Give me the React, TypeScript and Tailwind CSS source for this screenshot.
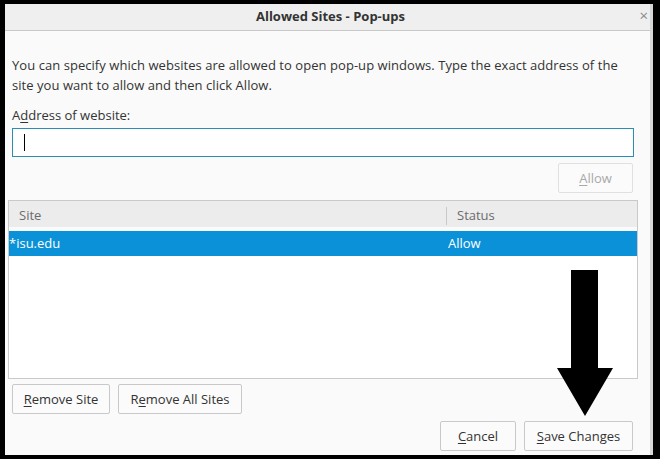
import React from "react";

const btn = "h-[30px] border border-[#c9c9c9] rounded-[2px] bg-[#fbfbfb] text-[13px] text-[#333] px-2 leading-none whitespace-nowrap";

function U({ children }: { children: React.ReactNode }) {
  return <span className="underline underline-offset-2">{children}</span>;
}

export default function App() {
  return (
    <div className="w-[660px] h-[459px] bg-black pl-[5px] pt-[4px] pr-[7px] pb-[4px] overflow-hidden" style={{ fontFamily: '"Open Sans", "Noto Sans", sans-serif' }}>
      <div className="relative w-full h-full bg-[#fafafa] border-r-[3px] border-[#d6d6d6] flex flex-col">
        <div className="h-[27px] shrink-0 bg-[#efefef] border-b border-[#c8c8c8] flex items-center justify-center relative">
          <span className="text-[13px] font-bold text-[#333] ml-[6px]">Allowed Sites - Pop-ups</span>
          <span className="absolute right-[2px] top-[4px] text-[15px] text-[#8a8a8a] leading-none">×</span>
        </div>
        <div className="px-[7px] pt-[24px] flex-1 flex flex-col">
          <p className="text-[13px] leading-[20px] text-[#333] pr-[4px] tracking-[0.05px]">
            You can specify which websites are allowed to open pop-up windows. Type the exact address of the site you want to allow and then click Allow.
          </p>
          <div className="text-[13px] text-[#333] mt-[10px] leading-[20px]">
            A<U>d</U>dress of website:
          </div>
          <div className="mt-[3px] h-[29px] w-[622px] border border-[#2a8db3] bg-white flex items-center pl-[11px]">
            <div className="w-px h-[17px] bg-black" />
          </div>
          <div className="flex justify-end mt-[6px] pr-[10px]">
            <button className={`${btn} w-[75px] h-[28px] text-[#a9a9a9] bg-[#f8f8f8] border-[#e0e0e0]`}>
              <U>A</U>llow
            </button>
          </div>
          <div className="mt-[7px] -ml-[4px] w-[630px] h-[179px] border border-[#c9c9c9] bg-white flex flex-col">
            <div className="h-[30px] bg-[#ececec] border-b-[4px] border-[#fafafa] pt-[4px] flex items-center text-[13px] text-[#6b6b6b]">
              <div className="w-[438px] pl-[10px] border-r border-[#c9c9c9] h-[18px] flex items-center">Site</div>
              <div className="pl-[10px]">Status</div>
            </div>
            <div className="h-[25px] bg-[#0a91d8] text-white text-[13px] flex items-center pt-[1px]">
              <div className="w-[439px]">*isu.edu</div>
              <div>Allow</div>
            </div>
          </div>
          <div className="flex gap-[8px] mt-[5px]">
            <button className={`${btn} w-[98px]`}>
              <U>R</U>emove Site
            </button>
            <button className={`${btn} w-[124px]`}>
              R<U>e</U>move All Sites
            </button>
          </div>
          <div className="flex justify-end gap-[8px] mt-[7px] pr-[10px]">
            <button className={`${btn} w-[76px]`}>
              <U>C</U>ancel
            </button>
            <button className={`${btn} w-[109px]`}>
              <U>S</U>ave Changes
            </button>
          </div>
        </div>
        <svg className="absolute left-[552px] top-[266px]" width="56" height="147" viewBox="0 0 56 147">
          <polygon points="14,0 41,0 41,98 56,98 28,146 0,98 14,98" fill="#000" />
        </svg>
      </div>
    </div>
  );
}
